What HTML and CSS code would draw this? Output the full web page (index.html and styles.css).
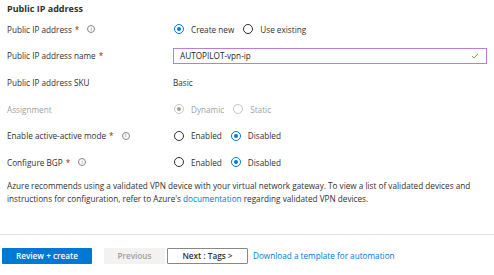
FILE: index.html
```html
<!DOCTYPE html>
<html lang="en">
<head>
  <meta charset="UTF-8" />
  <title>Public IP address</title>
  <link rel="stylesheet" href="styles.css">
</head>
<body>
  <div class="page">
    <h2 class="section-title">Public IP address</h2>

    <div class="form">
      <div class="label">Public IP address <span class="req">*</span><span class="info">i</span></div>
      <div class="field">
        <span class="option"><span class="radio checked"></span>Create new</span>
        <span class="option"><span class="radio"></span>Use existing</span>
      </div>

      <div class="label">Public IP address name <span class="req">*</span></div>
      <div class="field">
        <div class="text-input">
          <span>AUTOPILOT-vpn-ip</span>
          <svg class="check" viewBox="0 0 10 8" xmlns="http://www.w3.org/2000/svg">
            <path d="M1 4.2 L3.6 6.6 L9 1.2" fill="none" stroke="#57a300" stroke-width="1.2" />
          </svg>
        </div>
      </div>

      <div class="label">Public IP address SKU</div>
      <div class="field">Basic</div>

      <div class="label disabled">Assignment</div>
      <div class="field disabled">
        <span class="option"><span class="radio checked"></span>Dynamic</span>
        <span class="option"><span class="radio"></span>Static</span>
      </div>

      <div class="label">Enable active-active mode <span class="req">*</span><span class="info">i</span></div>
      <div class="field">
        <span class="option"><span class="radio"></span>Enabled</span>
        <span class="option"><span class="radio checked"></span>Disabled</span>
      </div>

      <div class="label">Configure BGP <span class="req">*</span><span class="info">i</span></div>
      <div class="field">
        <span class="option"><span class="radio"></span>Enabled</span>
        <span class="option"><span class="radio checked"></span>Disabled</span>
      </div>
    </div>

    <div class="note">
      <div>Azure recommends using a validated VPN device with your virtual network gateway. To view a list of validated devices and</div>
      <div><span>instructions for configuration, refer to Azure's</span> <a href="#">documentation</a> <span>regarding validated VPN devices.</span></div>
    </div>
  </div>

  <!-- barre d'actions en bas -->
  <div class="actions">
    <button class="btn primary">Review + create</button>
    <button class="btn prev" disabled>Previous</button>
    <button class="btn next">Next : Tags &gt;</button>
    <a class="template-link" href="#">Download a template for automation</a>
  </div>
</body>
</html>
```

FILE: styles.css
```css
body {
  margin: 0;
  font-family: "Open Sans", "Noto Sans", sans-serif;
  font-size: 8.2px;
  color: #323130;
  background: #fff;
}
.page {
  padding: 3px 7px 0 7px;
}
.section-title {
  margin: 0;
  font-size: 9px;
  line-height: 12px;
  font-weight: 700;
}
.form {
  margin-top: 1px;
  display: grid;
  grid-template-columns: 166px 314px;
  grid-auto-rows: 26.6px;
  align-items: center;
}
.label {
  display: flex;
  align-items: center;
}
.req {
  color: #a4262c;
  margin-left: 3px;
}
/* petite icone info */
.info {
  display: inline-flex;
  align-items: center;
  justify-content: center;
  width: 6px;
  height: 6px;
  margin-left: 8px;
  border: 1px solid #8a8886;
  border-radius: 50%;
  font-size: 5px;
  color: #605e5c;
  line-height: 1;
}
.field {
  display: flex;
  align-items: center;
}
.disabled {
  color: #a19f9d;
}
.option {
  display: inline-flex;
  align-items: center;
  margin-right: 8px;
}
.radio {
  position: relative;
  box-sizing: border-box;
  width: 10px;
  height: 10px;
  margin: 0 7px 0 1px;
  border: 1px solid #323130;
  border-radius: 50%;
}
.radio.checked {
  border-color: #0078d4;
}
.radio.checked::after {
  content: "";
  position: absolute;
  top: 2px;
  left: 2px;
  width: 4px;
  height: 4px;
  border-radius: 50%;
  background: #0078d4;
}
.disabled .radio {
  border-color: #c8c6c4;
}
.disabled .radio.checked::after {
  background: #a19f9d;
}
.text-input {
  box-sizing: border-box;
  width: 314px;
  height: 16px;
  padding: 0 6px;
  display: flex;
  align-items: center;
  justify-content: space-between;
  border: 1px solid #b77fd8;
  color: #201f1e;
}
.check {
  width: 8px;
  height: 6px;
  margin-right: 1px;
}
.note {
  margin-top: 3px;
  line-height: 13px;
}
.note a,
.template-link {
  color: #0078d4;
  text-decoration: none;
}
/* boutons du bas */
.actions {
  margin-top: 29px;
  border-top: 1px solid #e1dfdd;
  padding: 13px 2px 0 2px;
  display: flex;
  align-items: center;
}
.btn {
  box-sizing: border-box;
  height: 16px;
  padding: 0;
  font-family: inherit;
  font-size: 8.2px;
  font-weight: 600;
  border: 1px solid transparent;
  border-radius: 1px;
}
.primary {
  width: 90px;
  background: #0078d4;
  color: #fff;
}
.prev {
  width: 61px;
  margin-left: 12px;
  background: #f3f2f1;
  color: #a19f9d;
}
.next {
  width: 81px;
  margin-left: 2px;
  background: #fff;
  border-color: #8a8886;
  color: #323130;
}
.template-link {
  margin-left: 5px;
}
```
